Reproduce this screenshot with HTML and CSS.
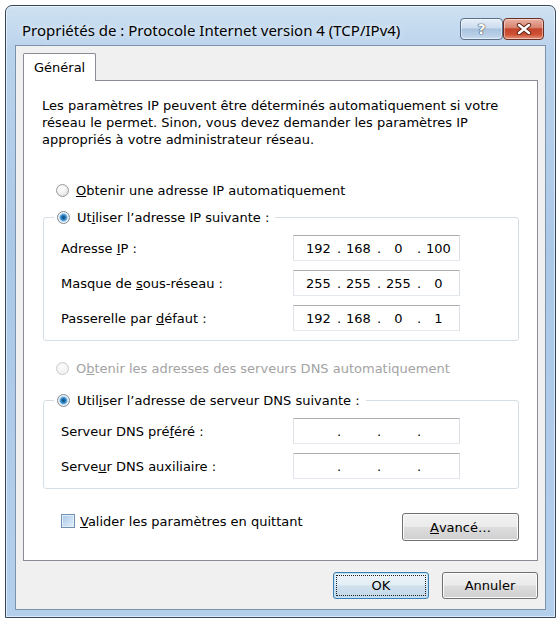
FILE: index.html
```html
<!DOCTYPE html>
<html lang="fr">
<head>
    <meta charset="UTF-8">
    <title>Propriétés de : Protocole Internet version 4 (TCP/IPv4)</title>
    <link rel="stylesheet" href="styles.css">
</head>
<body>

    <div class="window">
        <div class="titlebar">
            <span class="title">Propriétés de : Protocole Internet version 4 (TCP/IPv4)</span>
            <div class="caption-buttons">
                <div class="cap cap-help"><span>?</span></div>
                <div class="cap cap-close">
                    <svg width="16" height="12" viewBox="0 0 16 12">
                        <path d="M3 2 L13 10 M13 2 L3 10" stroke="#5b2418" stroke-width="4.4" stroke-linecap="round"/>
                        <path d="M3 2 L13 10 M13 2 L3 10" stroke="#ffffff" stroke-width="2.4" stroke-linecap="round"/>
                    </svg>
                </div>
            </div>
        </div>

        <div class="client">
            <div class="tabs">
                <div class="tab">Général</div>
            </div>

            <div class="panel">
                <p class="intro">Les paramètres IP peuvent être déterminés automatiquement si votre réseau le permet. Sinon, vous devez demander les paramètres IP appropriés à votre administrateur réseau.</p>

                <div class="option"><span class="radio"></span><span><u>O</u>btenir une adresse IP automatiquement</span></div>

                <fieldset class="group">
                    <legend class="option"><span class="radio checked"></span><span>Ut<u>i</u>liser l’adresse IP suivante :</span></legend>
                    <div class="row">
                        <span class="label">Adresse <u>I</u>P :</span>
                        <div class="ip"><span>192</span><i>.</i><span>168</span><i>.</i><span>0</span><i>.</i><span>100</span></div>
                    </div>
                    <div class="row">
                        <span class="label">Masque de <u>s</u>ous-réseau :</span>
                        <div class="ip"><span>255</span><i>.</i><span>255</span><i>.</i><span>255</span><i>.</i><span>0</span></div>
                    </div>
                    <div class="row">
                        <span class="label">Passerelle par <u>d</u>éfaut :</span>
                        <div class="ip"><span>192</span><i>.</i><span>168</span><i>.</i><span>0</span><i>.</i><span>1</span></div>
                    </div>
                </fieldset>

                <div class="option option-dns disabled"><span class="radio"></span><span>O<u>b</u>tenir les adresses des serveurs DNS automatiquement</span></div>

                <fieldset class="group group-dns">
                    <legend class="option"><span class="radio checked"></span><span>Util<u>i</u>ser l’adresse de serveur DNS suivante :</span></legend>
                    <div class="row">
                        <span class="label">Serveur DNS pré<u>f</u>éré :</span>
                        <div class="ip"><span></span><i>.</i><span></span><i>.</i><span></span><i>.</i><span></span></div>
                    </div>
                    <div class="row">
                        <span class="label">Serve<u>u</u>r DNS auxiliaire :</span>
                        <div class="ip"><span></span><i>.</i><span></span><i>.</i><span></span><i>.</i><span></span></div>
                    </div>
                </fieldset>

                <div class="bottom-row">
                    <div class="checkline"><span class="check"></span><span><u>V</u>alider les paramètres en quittant</span></div>
                    <div class="btn btn-wide"><u>A</u>vancé…</div>
                </div>
            </div>

            <div class="dialog-buttons">
                <div class="btn btn-default">OK</div>
                <div class="btn">Annuler</div>
            </div>
        </div>
    </div>

</body>
</html>
```

FILE: styles.css
```css
/* Page */
body {
    margin: 0;
    background: #fff;
    font-family: "DejaVu Sans", sans-serif;
    font-size: 13px;
    color: #000;
}

/* Glass window frame */
.window {
    box-sizing: border-box;
    width: 551px;
    height: 613px;
    margin: 5px 0 0 5px;
    padding: 0 9px 7px 9px;
    border: 1px solid #34475c;
    border-radius: 7px 7px 0 0;
    background: linear-gradient(180deg, #cfe1f2 0%, #bad3ec 7%, #abc8e7 40%, #b3cfec 100%);
    box-shadow: inset 0 0 0 1px rgba(255, 255, 255, 0.55);
    display: flex;
    flex-direction: column;
}

.titlebar {
    height: 39px;
    display: flex;
    align-items: flex-start;
}

.title {
    flex: 1;
    margin: 14px 0 0 7px;
    font-family: "Noto Sans", sans-serif;
    font-size: 15px;
    line-height: 20px;
    color: #000;
    text-shadow: 0 0 6px rgba(255, 255, 255, 0.9);
}

.caption-buttons {
    display: flex;
    margin: 12px 2px 0 0;
}

.cap {
    box-sizing: border-box;
    height: 22px;
    border: 1px solid #5a6f8a;
    border-radius: 4px;
    display: flex;
    justify-content: center;
    align-items: center;
    box-shadow: inset 0 0 0 1px rgba(255, 255, 255, 0.45);
}

.cap-help {
    width: 43px;
    background: linear-gradient(180deg, #e6eff8 0%, #cbdcee 45%, #a9c2dc 50%, #b9d0e8 85%, #cfe1f3 100%);
}

.cap-help span {
    font-family: "DejaVu Sans", sans-serif;
    font-size: 14px;
    font-weight: bold;
    color: #fff;
    text-shadow: 0 0 1px #3d4b5c, 0 0 1px #3d4b5c, 0 0 1px #3d4b5c;
}

.cap-close {
    width: 41px;
    border-color: #6b2e22;
    background: linear-gradient(180deg, #eab0a2 0%, #d98571 42%, #c4442c 50%, #cf5235 78%, #e3977e 100%);
}

/* Client area */
.client {
    flex: 1;
    border: 1px solid #7c91aa;
    background: #f0f0f0;
    padding: 7px 7px 10px 7px;
    display: flex;
    flex-direction: column;
}

.tabs {
    height: 27px;
    display: flex;
}

.tab {
    box-sizing: border-box;
    height: 28px;
    padding: 0 10px;
    border: 1px solid #898c95;
    border-bottom: none;
    border-radius: 2px 2px 0 0;
    background: #fff;
    line-height: 28px;
    position: relative;
    z-index: 1;
}

.panel {
    box-sizing: border-box;
    height: 481px;
    border: 1px solid #898c95;
    background: #fff;
    padding: 0 18px;
}

.intro {
    margin: 16px 0 0 0;
    line-height: 17px;
}

/* Radio lines */
.option {
    height: 20px;
    display: flex;
    align-items: center;
    gap: 7px;
    margin: 32px 0 0 14px;
}

.option.disabled {
    color: #a3a3a3;
}

.option-dns {
    margin-top: 17px;
}

.radio {
    box-sizing: border-box;
    width: 13px;
    height: 13px;
    border-radius: 50%;
    border: 1px solid #9a9a9a;
    background: radial-gradient(circle at 40% 35%, #ffffff 0%, #f1f1f1 45%, #d5d5d5 100%);
    flex-shrink: 0;
}

.radio.checked {
    border-color: #7f8c99;
    background: radial-gradient(circle, #0f4c7e 0%, #1d69a5 22%, #5aa6df 42%, #a6d0ef 50%, #f4f4f4 60%, #dcdcdc 100%);
}

.disabled .radio {
    border-color: #c9c9c9;
    background: radial-gradient(circle at 40% 35%, #fafafa 0%, #efefef 100%);
}

/* Group boxes */
.group {
    margin: 7px 0 0 1px;
    padding: 0 0 9px 0;
    border: 1px solid #d5dfe5;
    border-radius: 3px;
    min-width: 0;
}

.group-dns {
    margin-top: 12px;
}

.group legend {
    margin: 0 0 0 10px;
    padding: 0 6px 0 3px;
}

.row {
    height: 26px;
    display: flex;
    align-items: center;
    padding-left: 17px;
    margin-top: 9px;
}

.group .row:first-of-type {
    margin-top: 8px;
}

.label {
    width: 232px;
}

.ip {
    box-sizing: border-box;
    width: 167px;
    height: 26px;
    border: 1px solid;
    border-color: #abadb3 #dbdfe6 #e3e9ef #e2e3ea;
    display: flex;
    align-items: center;
    padding-left: 6px;
}

.ip span {
    width: 37px;
    text-align: center;
}

.ip i {
    width: 3px;
    font-style: normal;
    text-align: center;
}

/* Bottom of the tab */
.bottom-row {
    display: flex;
    justify-content: space-between;
    align-items: flex-start;
    margin-top: 22px;
}

.checkline {
    height: 20px;
    display: flex;
    align-items: center;
    gap: 5px;
    margin-left: 19px;
}

.check {
    box-sizing: border-box;
    width: 14px;
    height: 14px;
    border: 1px solid #6f8fb3;
    background: linear-gradient(135deg, #a9c9e8 0%, #c6dcf1 50%, #e6f0fa 100%);
    box-shadow: inset 0 0 0 1px #e3eef9;
}

/* Buttons */
.btn {
    box-sizing: border-box;
    width: 96px;
    height: 27px;
    border: 1px solid #707070;
    border-radius: 3px;
    background: linear-gradient(180deg, #f2f2f2 0%, #ebebeb 48%, #dddddd 52%, #cfcfcf 100%);
    box-shadow: inset 0 0 0 1px #fbfbfb;
    display: flex;
    justify-content: center;
    align-items: center;
}

.btn-wide {
    width: 117px;
    height: 28px;
    margin-top: 2px;
}

.btn-default {
    border-color: #3c7fb1;
    background: linear-gradient(180deg, #eef5fa 0%, #e2edf5 48%, #d0e1ee 52%, #c3d8e9 100%);
    box-shadow: inset 0 0 0 1px #bfe3f8;
    outline: 1px dotted #222;
    outline-offset: -4px;
}

.dialog-buttons {
    display: flex;
    justify-content: flex-end;
    gap: 13px;
    margin-top: 11px;
}
```
